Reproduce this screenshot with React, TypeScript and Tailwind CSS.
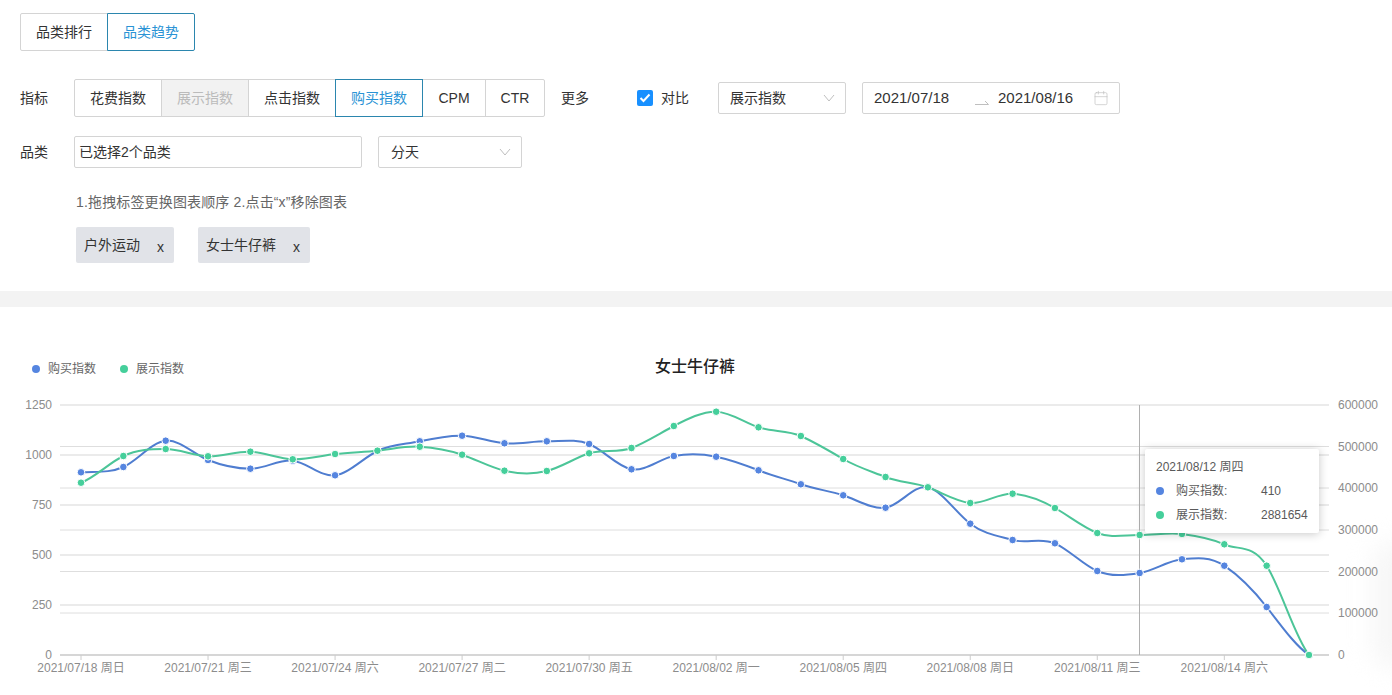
import { Calendar } from "lucide-react";

const blue = [472.3, 467, 440.7, 460, 468.7, 460.7, 475.3, 451, 441.3, 435.7, 443.3, 441.3, 444, 469.3, 456, 456.7, 470.3, 484.3, 495.3, 507.7, 487.3, 523.7, 540, 543.3, 571, 573, 559.3, 565.7, 607, 655];
const green = [482.7, 456, 449, 456.3, 451.7, 459.3, 454, 450.7, 446.7, 454.7, 470.7, 471, 453.3, 448, 426, 411.7, 427.3, 436, 459, 477, 487.3, 503, 493.7, 508, 533, 535, 534, 544.3, 565.7, 655];

const pointX = (i: number) => 81 + i * 42.345;

function smoothPath(ys: number[]) {
  let d = `M${pointX(0)} ${ys[0]}`;
  for (let i = 0; i < ys.length - 1; i++) {
    const y0 = ys[Math.max(i - 1, 0)];
    const y3 = ys[Math.min(i + 2, ys.length - 1)];
    const c1 = ys[i] + (ys[i + 1] - y0) * 0.2;
    const c2 = ys[i + 1] - (y3 - ys[i]) * 0.2;
    d += ` C${pointX(i) + 14} ${c1} ${pointX(i + 1) - 14} ${c2} ${pointX(i + 1)} ${ys[i + 1]}`;
  }
  return d;
}

const leftTicks = [
  { label: "1250", y: 405 },
  { label: "1000", y: 455 },
  { label: "750", y: 505 },
  { label: "500", y: 555 },
  { label: "250", y: 605 },
  { label: "0", y: 655 },
];
const rightTicks = [
  { label: "600000", y: 405 },
  { label: "500000", y: 446.5 },
  { label: "400000", y: 488 },
  { label: "300000", y: 530 },
  { label: "200000", y: 571.5 },
  { label: "100000", y: 613 },
  { label: "0", y: 655 },
];
const xLabels = [
  "2021/07/18 周日",
  "2021/07/21 周三",
  "2021/07/24 周六",
  "2021/07/27 周二",
  "2021/07/30 周五",
  "2021/08/02 周一",
  "2021/08/05 周四",
  "2021/08/08 周日",
  "2021/08/11 周三",
  "2021/08/14 周六",
];

function Chevron() {
  return (
    <svg width="12" height="8" viewBox="0 0 12 8" fill="none" stroke="#bfbfbf" strokeWidth="1">
      <path d="M1 1l5 6 5-6" />
    </svg>
  );
}

function Series({ ys, line, dot }: { ys: number[]; line: string; dot: string }) {
  return (
    <g>
      <path d={smoothPath(ys)} fill="none" stroke={line} strokeWidth="2" />
      {ys.map((y, i) => (
        <circle key={i} cx={pointX(i)} cy={y} r="3.8" fill={dot} stroke="#fff" strokeWidth="1" />
      ))}
    </g>
  );
}

export default function App() {
  return (
    <div className="relative h-[695px] w-[1392px] overflow-hidden bg-white font-['Liberation_Sans','Noto_Sans_CJK_SC',sans-serif] text-[14px] text-[#333]">
      {/* faint glow at the right edge */}
      <div className="absolute right-[-30px] top-[540px] h-[130px] w-[50px] rounded-full bg-[#f7f7f7] blur-md"></div>

      {/* filters */}
      <div className="relative h-[291px] pl-5 pt-[13px]">
        <div className="flex h-[38px]">
          <div className="flex w-[88px] items-center justify-center rounded-l-[2px] border border-[#d4d4d4]">品类排行</div>
          <div className="relative -ml-px flex w-[88px] items-center justify-center rounded-r-[2px] border border-[#2b86ae] text-[#2a93d5]">品类趋势</div>
        </div>

        <div className="mt-7 flex h-[38px] items-center">
          <div className="w-[54px]">指标</div>
          <div className="flex h-full">
            <div className="flex w-[88px] items-center justify-center rounded-l-[2px] border border-[#d4d4d4]">花费指数</div>
            <div className="-ml-px flex w-[88px] items-center justify-center border border-[#d4d4d4] bg-[#f2f2f2] text-[#bbb]">展示指数</div>
            <div className="-ml-px flex w-[88px] items-center justify-center border border-[#d4d4d4]">点击指数</div>
            <div className="relative -ml-px flex w-[88px] items-center justify-center border border-[#2b86ae] text-[#2a93d5]">购买指数</div>
            <div className="-ml-px flex w-[64px] items-center justify-center border border-[#d4d4d4]">CPM</div>
            <div className="-ml-px flex w-[60px] items-center justify-center rounded-r-[2px] border border-[#d4d4d4]">CTR</div>
          </div>
          <div className="ml-4">更多</div>
          <div className="ml-12 flex h-4 w-4 items-center justify-center rounded-[2px] bg-[#1890ff]">
            <svg width="12" height="10" viewBox="0 0 12 10" fill="none" stroke="#fff" strokeWidth="2">
              <path d="M1.5 5l3 3 6-6.5" />
            </svg>
          </div>
          <div className="ml-2">对比</div>
          <div className="ml-[29px] flex h-8 w-[128px] items-center justify-between rounded-[2px] border border-[#d4d4d4] pl-[11px] pr-[10px]">
            展示指数
            <Chevron />
          </div>
          <div className="ml-4 flex h-8 w-[258px] items-center rounded-[2px] border border-[#d4d4d4] pl-[11px] pr-[10px] text-[15px]">
            <span className="w-[101px]">2021/07/18</span>
            <svg width="14" height="6" viewBox="0 0 14 6" fill="none" stroke="#bfbfbf" strokeWidth="1" className="mt-2">
              <path d="M0 5.5h13.5L10 2" />
            </svg>
            <span className="ml-[9px] flex-1">2021/08/16</span>
            <Calendar size={16} strokeWidth={1} color="#bfbfbf" />
          </div>
        </div>

        <div className="mt-[19px] flex h-8 items-center">
          <div className="w-[54px]">品类</div>
          <div className="flex h-full w-[288px] items-center rounded-[2px] border border-[#d4d4d4] pl-1">已选择2个品类</div>
          <div className="ml-4 flex h-full w-[144px] items-center justify-between rounded-[2px] border border-[#d4d4d4] pl-3 pr-[10px]">
            分天
            <Chevron />
          </div>
        </div>

        <div className="ml-14 mt-[25px] text-[14px] leading-[18px] tracking-[0.15px] text-[#666]">1.拖拽标签更换图表顺序 2.点击“x”移除图表</div>

        <div className="ml-14 mt-4 flex gap-6">
          <div className="flex h-9 w-[98px] items-center rounded-[2px] bg-[#e1e3e8] pl-2">
            户外运动
            <span className="ml-[17px] mt-1">x</span>
          </div>
          <div className="flex h-9 w-[112px] items-center rounded-[2px] bg-[#e1e3e8] pl-2">
            女士牛仔裤
            <span className="ml-[17px] mt-1">x</span>
          </div>
        </div>
      </div>

      <div className="relative h-4 bg-[#f3f3f3]"></div>

      {/* chart */}
      <div className="relative">
        <div className="relative flex h-[85px] items-start pl-8 pt-[52px]">
          <div className="flex h-5 items-center text-[12px] text-[#666]">
            <span className="h-2 w-2 rounded-full bg-[#5585e0]"></span>
            <span className="ml-2">购买指数</span>
            <span className="ml-6 h-2 w-2 rounded-full bg-[#45cf9b]"></span>
            <span className="ml-2">展示指数</span>
          </div>
          <div className="absolute left-0 top-[48px] w-[1390px] text-center text-[16px] font-medium leading-6 text-[#222]">女士牛仔裤</div>
        </div>

        <svg width="1392" height="303" viewBox="0 392 1392 303" className="block">
          {leftTicks.map((t) => (
            <g key={t.label}>
              <line x1="60" x2="1329" y1={t.y} y2={t.y} stroke={t.label === "0" ? "#c8c8c8" : "#e4e4e4"} strokeWidth="1.6" />
              <text x="52" y={t.y + 4} textAnchor="end" fontSize="12" fill="#8c8c8c">{t.label}</text>
            </g>
          ))}
          {rightTicks.map((t) => (
            <g key={t.label}>
              {t.label !== "600000" && t.label !== "0" && (
                <line x1="60" x2="1329" y1={t.y} y2={t.y} stroke="#dedede" strokeWidth="1" />
              )}
              <text x="1338" y={t.y + 4} fontSize="12" fill="#8c8c8c">{t.label}</text>
            </g>
          ))}
          {xLabels.map((label, i) => (
            <g key={label}>
              <line x1={pointX(i * 3)} x2={pointX(i * 3)} y1="655" y2="660" stroke="#cccccc" strokeWidth="1" />
              <text x={pointX(i * 3)} y="672" textAnchor="middle" fontSize="12" fill="#8c8c8c">{label}</text>
            </g>
          ))}
          <line x1="1139.5" x2="1139.5" y1="405" y2="655" stroke="#b0b0b0" strokeWidth="1" />
          <Series ys={blue} line="#4f7dd0" dot="#5585e0" />
          <Series ys={green} line="#4cc598" dot="#45cf9b" />
        </svg>

        {/* tooltip */}
        <div className="absolute left-[1145px] top-[142px] h-[84px] w-[174px] rounded-[2px] bg-white pl-[11px] pt-[10px] text-[12px] leading-4 text-[#595959] shadow-[0_1px_10px_rgba(0,0,0,0.22)]">
          <div>2021/08/12 周四</div>
          <div className="mt-2 flex items-center">
            <span className="h-2 w-2 rounded-full bg-[#5585e0]"></span>
            <span className="ml-3 w-[85px]">购买指数:</span>
            <span>410</span>
          </div>
          <div className="mt-2 flex items-center">
            <span className="h-2 w-2 rounded-full bg-[#45cf9b]"></span>
            <span className="ml-3 w-[85px]">展示指数:</span>
            <span>2881654</span>
          </div>
        </div>
      </div>
    </div>
  );
}
